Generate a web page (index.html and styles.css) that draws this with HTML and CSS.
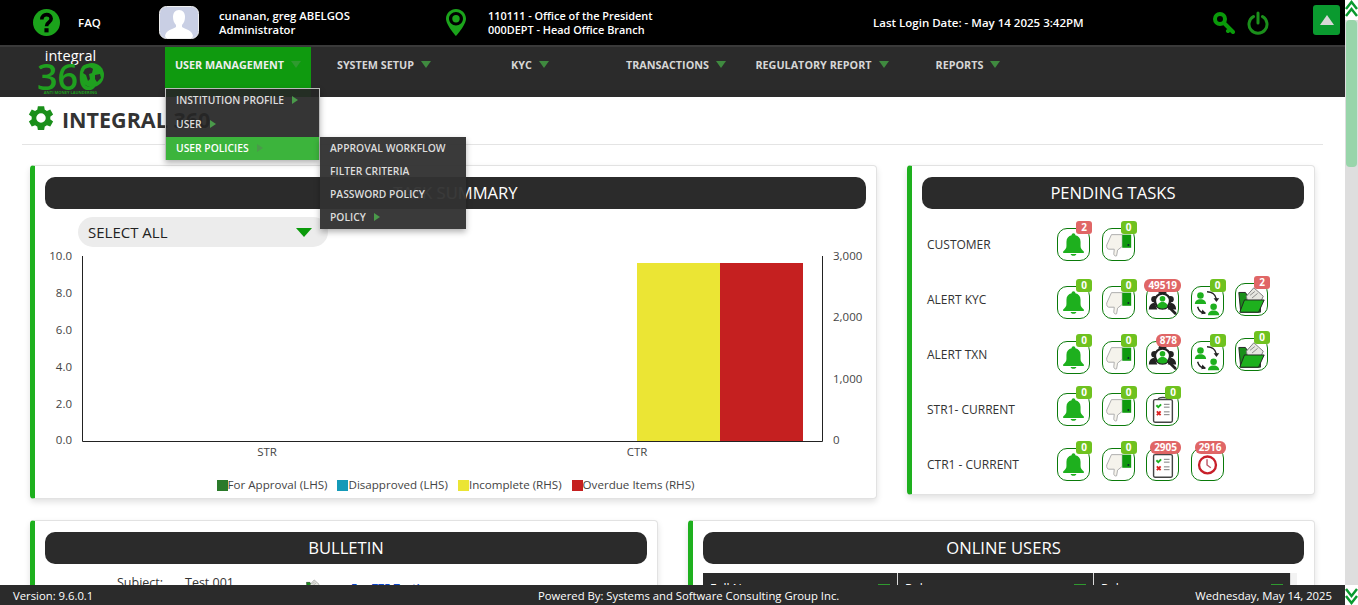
FILE: index.html
```html
<!DOCTYPE html>
<html lang="en">
<head>
  <meta charset="UTF-8" />
  <meta name="viewport" content="width=device-width, initial-scale=1.0"/>
  <title>Integral 360</title>
  <link rel="stylesheet" href="styles.css">
</head>
<body>
  <svg class="defs" width="0" height="0">
    <symbol id="i-bell" viewBox="0 0 33 33">
      <path fill="#1eb01e" d="M16.500 28.500c1.700 0 3-.9 3-2h-6c0 1.100 1.300 2 3 2zM24 18v-4.500c0-3.500-2.200-6-5.500-6.800V6.500c0-1.100-.9-2-2-2s-2 .9-2 2v.2C11.200 7.500 9 10 9 13.500V18c0 2.500-1.500 4.200-3.500 6v1.500h22V24c-2-1.800-3.500-3.500-3.500-6z"/>
    </symbol>
    <symbol id="i-down" viewBox="0 0 33 33">
      <path fill="#f5f3ec" stroke="#aaa" stroke-width="1" d="M4 17 9 6h11.500v12.500l-5 4-1 6c-1.500.8-3-.5-3-2l.5-5H6c-1.200 0-2.500-2-2-4.500z"/>
      <path fill="#0f9a0f" d="M20.500 6H30v14h-9.500z"/>
      <circle cx="27" cy="17" r="1" fill="#123"/>
    </symbol>
    <symbol id="i-search" viewBox="0 0 33 33">
      <g fill="#222">
        <circle cx="8" cy="13" r="3.500"/><circle cx="25" cy="13" r="3.500"/>
        <path d="M2 24c0-5 3-7 6-7l3 7zM31 24c0-5-3-7-6-7l-3 7z"/>
        <path d="M13 4h7l1 3h-9z"/>
      </g>
      <circle cx="16.500" cy="15" r="8" fill="#fff" stroke="#222" stroke-width="2.500"/>
      <circle cx="16.500" cy="12.500" r="3" fill="#1eb01e"/>
      <path fill="#1eb01e" d="M11 21c0-3 2.500-5 5.500-5s5.500 2 5.500 5c-3 2.500-8 2.500-11 0z"/>
      <path stroke="#222" stroke-width="3" stroke-linecap="round" d="m23 21 7 7"/>
    </symbol>
    <symbol id="i-swap" viewBox="0 0 33 33">
      <g fill="#1eb01e">
        <circle cx="9" cy="9" r="3.500"/><path d="M3 18c0-3 2.500-5 6-5s6 2 6 5z"/>
        <circle cx="23" cy="21" r="3.500"/><path d="M17 30c0-3 2.500-5 6-5s6 2 6 5z"/>
      </g>
      <g fill="none" stroke="#222" stroke-width="1.500">
        <path d="M16 5c4 0 9 2 10 8"/><path d="M6 21c1 4 4 6.500 8 7"/>
      </g>
      <path fill="#222" d="m23 12 6 0-3 4zM11 24l-1 5 5-1z"/>
    </symbol>
    <symbol id="i-folder" viewBox="0 0 33 33">
      <path fill="#1a8f1a" stroke="#222" d="M3 9h7l2 3h14v18H5z"/>
      <path fill="#e6e6e0" stroke="#777" d="m11 13 8-9 10 9-4 9H13z"/>
      <path stroke="#888" d="m15 12 5-4m-3 7 6-5"/>
      <path fill="#1eb01e" stroke="#222" d="M9 17h21l-6 13H4z"/>
    </symbol>
    <symbol id="i-check" viewBox="0 0 33 33">
      <rect x="7" y="6" width="20" height="24" rx="1.500" fill="#fff" stroke="#444" stroke-width="1.500"/>
      <path fill="none" stroke="#444" stroke-width="1.500" d="M12 6c0-3 10-3 10 0"/>
      <path fill="none" stroke="#1eb01e" stroke-width="2" d="m10 12 2 2 3-3"/>
      <path fill="none" stroke="#d22" stroke-width="2" d="m10.500 18.500 4 4m0-4-4 4"/>
      <path stroke="#777" d="M18 11h6m-6 3h6m-6 5h6m-6 3h6"/>
    </symbol>
    <symbol id="i-clock" viewBox="0 0 33 33">
      <circle cx="16.500" cy="17" r="9" fill="#fff" stroke="#c8202a" stroke-width="2.500"/>
      <path fill="none" stroke="#b56" stroke-width="1.500" d="M16 11v6l4 3"/>
    </symbol>
  </svg>

  <div class="shell">
    <div class="page">
      <header class="topbar">
        <a class="faq">
          <svg class="help" viewBox="0 0 26 26"><circle cx="13" cy="13" r="13" fill="#1ba31b"/><path fill="none" stroke="#000" stroke-width="3.500" d="M8.500 10c0-6 9-6 9-.5 0 3.500-4.500 3-4.500 7"/><rect x="11" y="18.500" width="4" height="4" fill="#000"/></svg>
          <span>FAQ</span>
        </a>
        <div class="who">
          <svg class="avatar" viewBox="0 0 40 33"><rect x=".5" y=".5" width="39" height="32" rx="7" fill="#c9cfe4" stroke="#eee"/><path fill="#fff" d="M20 4c4 0 6 3 6 7 0 3-1 6-3 8v2c3 2 10 3 11 9l-1 2H7l-1-2c1-6 8-7 11-9v-2c-2-2-3-5-3-8 0-4 2-7 6-7z"/></svg>
          <div class="lines">
            <div>cunanan, greg ABELGOS</div>
            <div>Administrator</div>
          </div>
        </div>
        <div class="where">
          <svg class="pin" viewBox="0 0 20 27"><path fill="#1ba31b" fill-rule="evenodd" d="M10 0C4.500 0 0 4.300 0 9.700 0 16 10 27 10 27s10-11 10-17.300C20 4.300 15.500 0 10 0zm0 3c3.800 0 7 3 7 6.700s-3.200 6.700-7 6.700-7-3-7-6.700S6.200 3 10 3z"/><circle cx="10" cy="9.700" r="3.700" fill="#1ba31b"/></svg>
          <div class="lines">
            <div>110111 - Office of the President</div>
            <div>000DEPT - Head Office Branch</div>
          </div>
        </div>
        <div class="last-login">Last Login Date: - May 14 2025 3:42PM</div>
        <svg class="key" viewBox="0 0 22 22"><circle cx="7" cy="7" r="5" fill="none" stroke="#0a9a0a" stroke-width="4"/><path stroke="#0a9a0a" stroke-width="4" stroke-linecap="round" d="m11 11 9 9m-3-3-2 2"/></svg>
        <svg class="power" viewBox="0 0 22 22"><path fill="none" stroke="#1b8f1b" stroke-width="3" stroke-linecap="round" d="M6.500 4.500a9 9 0 1 0 9 0M11 1v10"/></svg>
        <button class="collapse"></button>
      </header>

      <nav class="mainnav">
        <div class="logo">
          <div class="logo-top">integral</div>
          <div class="logo-num">360</div>
          <svg class="logo-globe" viewBox="0 0 24 24"><circle cx="12" cy="12" r="12" fill="#1fa01f"/><path fill="#2b2b2b" d="M5 6c3-2 6-2 8 0l-1 4-3 1 1 5-2 2-2-6-3-2zM15 12l5-1 1 4-4 4-2-3z"/></svg>
          <div class="logo-sub">ANTI MONEY LAUNDERING</div>
        </div>
        <div class="menu">
          <div class="menu-item active">
            <span>USER MANAGEMENT</span><i class="caret"></i>
            <ul class="dropdown">
              <li>INSTITUTION PROFILE<i class="arrow"></i></li>
              <li>USER<i class="arrow"></i></li>
              <li class="current">USER POLICIES<i class="arrow"></i>
                <ul class="dropdown sub">
                  <li>APPROVAL WORKFLOW</li>
                  <li>FILTER CRITERIA</li>
                  <li>PASSWORD POLICY</li>
                  <li>POLICY<i class="arrow"></i></li>
                </ul>
              </li>
            </ul>
          </div>
          <div class="menu-item"><span>SYSTEM SETUP</span><i class="caret"></i></div>
          <div class="menu-item"><span>KYC</span><i class="caret"></i></div>
          <div class="menu-item"><span>TRANSACTIONS</span><i class="caret"></i></div>
          <div class="menu-item"><span>REGULATORY REPORT</span><i class="caret"></i></div>
          <div class="menu-item"><span>REPORTS</span><i class="caret"></i></div>
        </div>
      </nav>

      <main class="content">
        <div class="page-title">
          <svg class="gear" viewBox="0 0 24 24"><path fill="#1a8f1a" d="M19.400 13a7.600 7.600 0 0 0 0-2l2.300-1.800-2.300-4-2.700 1.100a7.600 7.600 0 0 0-1.700-1L14.500 2.500h-5L9 5.300a7.600 7.600 0 0 0-1.700 1L4.600 5.200l-2.300 4L4.600 11a7.600 7.600 0 0 0 0 2l-2.300 1.800 2.300 4 2.700-1.100c.5.400 1.100.7 1.700 1l.5 2.800h5l.5-2.800c.6-.3 1.200-.6 1.700-1l2.700 1.100 2.300-4zM12 15.800a3.800 3.800 0 1 1 0-7.600 3.800 3.800 0 0 1 0 7.600z"/></svg>
          <h1>INTEGRAL 360</h1>
        </div>

        <div class="row row-top">
          <section class="panel chart-panel">
            <h2 class="panel-title">TASK SUMMARY</h2>
            <div class="select-all"><span>SELECT ALL</span><i></i></div>
            <svg class="chart" width="821" height="216" viewBox="0 0 821 216">
              <rect x="592" y="16" width="83" height="178" fill="#ebe534"/>
              <rect x="675" y="16" width="83" height="178" fill="#c52020"/>
              <path fill="none" stroke="#222" d="M37.500 9v185.500h740V9"/>
              <g class="tick" text-anchor="end">
                <text x="27" y="13">10.0</text><text x="27" y="50">8.0</text><text x="27" y="87">6.0</text>
                <text x="27" y="124">4.0</text><text x="27" y="161">2.0</text><text x="27" y="197">0.0</text>
              </g>
              <g class="tick">
                <text x="788" y="13">3,000</text><text x="788" y="74">2,000</text>
                <text x="788" y="136">1,000</text><text x="788" y="197">0</text>
                <text x="222" y="209" text-anchor="middle">STR</text><text x="592" y="209" text-anchor="middle">CTR</text>
              </g>
            </svg>
            <div class="legend">
              <span><i class="sw-green"></i>For Approval (LHS)</span>
              <span><i class="sw-blue"></i>Disapproved (LHS)</span>
              <span><i class="sw-yellow"></i>Incomplete (RHS)</span>
              <span><i class="sw-red"></i>Overdue Items (RHS)</span>
            </div>
          </section>

          <section class="panel tasks-panel">
            <h2 class="panel-title">PENDING TASKS</h2>
            <div class="task-row">
              <div class="task-name">CUSTOMER</div>
              <a class="task-btn"><svg><use href="#i-bell"/></svg><b class="badge red">2</b></a>
              <a class="task-btn"><svg><use href="#i-down"/></svg><b class="badge">0</b></a>
            </div>
            <div class="task-row alert">
              <div class="task-name">ALERT KYC</div>
              <a class="task-btn"><svg><use href="#i-bell"/></svg><b class="badge">0</b></a>
              <a class="task-btn"><svg><use href="#i-down"/></svg><b class="badge">0</b></a>
              <a class="task-btn"><svg><use href="#i-search"/></svg><b class="badge red wide">49519</b></a>
              <a class="task-btn"><svg><use href="#i-swap"/></svg><b class="badge">0</b></a>
              <a class="task-btn raised"><svg><use href="#i-folder"/></svg><b class="badge red">2</b></a>
            </div>
            <div class="task-row alert">
              <div class="task-name">ALERT TXN</div>
              <a class="task-btn"><svg><use href="#i-bell"/></svg><b class="badge">0</b></a>
              <a class="task-btn"><svg><use href="#i-down"/></svg><b class="badge">0</b></a>
              <a class="task-btn"><svg><use href="#i-search"/></svg><b class="badge red wide">878</b></a>
              <a class="task-btn"><svg><use href="#i-swap"/></svg><b class="badge">0</b></a>
              <a class="task-btn raised"><svg><use href="#i-folder"/></svg><b class="badge">0</b></a>
            </div>
            <div class="task-row">
              <div class="task-name">STR1- CURRENT</div>
              <a class="task-btn"><svg><use href="#i-bell"/></svg><b class="badge">0</b></a>
              <a class="task-btn"><svg><use href="#i-down"/></svg><b class="badge">0</b></a>
              <a class="task-btn"><svg><use href="#i-check"/></svg><b class="badge">0</b></a>
            </div>
            <div class="task-row">
              <div class="task-name">CTR1 - CURRENT</div>
              <a class="task-btn"><svg><use href="#i-bell"/></svg><b class="badge">0</b></a>
              <a class="task-btn"><svg><use href="#i-down"/></svg><b class="badge">0</b></a>
              <a class="task-btn"><svg><use href="#i-check"/></svg><b class="badge red wide">2905</b></a>
              <a class="task-btn"><svg><use href="#i-clock"/></svg><b class="badge red wide">2916</b></a>
            </div>
          </section>
        </div>

        <div class="row row-bottom">
          <section class="panel">
            <h2 class="panel-title">BULLETIN</h2>
            <div class="bulletin-row">
              <span class="b-label">Subject:</span>
              <span class="b-value">Test 001</span>
              <svg class="b-icon" width="16" height="16"><use href="#i-folder"/></svg>
              <a class="b-link">For 775 Testing</a>
            </div>
          </section>
          <section class="panel">
            <h2 class="panel-title">ONLINE USERS</h2>
            <div class="users-head">
              <div class="users-table">
                <div>Full Name<i></i></div>
                <div>Role<i></i></div>
                <div>Role<i></i></div>
              </div>
              <div class="users-gutter"></div>
            </div>
          </section>
        </div>
      </main>

      <footer class="statusbar">
        <span>Version: 9.6.0.1</span>
        <span>Powered By: Systems and Software Consulting Group Inc.</span>
        <span class="today">Wednesday, May 14, 2025</span>
      </footer>
    </div>

    <div class="scrollbar">
      <svg class="chev" viewBox="0 0 13 20"><path fill="none" stroke="#0a9a2f" stroke-width="2.500" d="m1 9 5.500-7L12 9M1 16l5.500-7 5.500 7"/></svg>
      <div class="thumb"></div>
      <svg class="chev" viewBox="0 0 13 20"><path fill="none" stroke="#0a9a2f" stroke-width="2.500" d="m1 4 5.500 7L12 4M1 11l5.500 7 5.500-7"/></svg>
    </div>
  </div>
</body>
</html>
```

FILE: styles.css
```css
* {
  box-sizing: border-box;
}

body {
  font-family: 'Open Sans', sans-serif;
  margin: 0;
  height: 100vh;
  overflow: hidden;
  background: white;
  color: #333;
}

.defs {
  position: absolute;
}

.shell {
  display: flex;
  height: 100%;
}

.page {
  flex: 1;
  min-width: 0;
  display: flex;
  flex-direction: column;
}

/* top black bar */
.topbar {
  height: 47px;
  flex: none;
  display: flex;
  align-items: center;
  background: black;
  border-bottom: 2px solid #3a3a3a;
  color: white;
  font-size: 11.5px;
  font-weight: 600;
  padding-left: 33px;
  line-height: 14px;
}

.faq {
  display: flex;
  align-items: center;
  gap: 18px;
  width: 126px;
}

.help {
  width: 27px;
  height: 27px;
}

.who {
  display: flex;
  align-items: center;
  gap: 20px;
  width: 287px;
  font-size: 11.3px;
}

.avatar {
  width: 40px;
  height: 33px;
}

.where {
  display: flex;
  align-items: center;
  gap: 22px;
  width: 427px;
  font-size: 10.9px;
}

.pin {
  width: 20px;
  height: 27px;
}

.last-login {
  width: 340px;
}

.key {
  width: 22px;
  height: 22px;
  margin-right: 12px;
}

.power {
  width: 22px;
  height: 24px;
}

.collapse {
  width: 27px;
  height: 30px;
  margin-left: 44px;
  margin-top: -6px;
  border: none;
  border-radius: 3px;
  background: #0a9a2f;
  position: relative;
}

.collapse::after {
  content: "";
  position: absolute;
  left: 7px;
  top: 10px;
  border-left: 7px solid transparent;
  border-right: 7px solid transparent;
  border-bottom: 10px solid #d8d8d8;
}

/* main menu */
.mainnav {
  height: 50px;
  flex: none;
  display: flex;
  background: #2b2b2b;
}

.logo {
  position: relative;
  width: 165px;
  padding: 2px 0 0 37px;
  color: white;
}

.logo-top {
  width: 67px;
  text-align: center;
  font-size: 14.5px;
  line-height: 14px;
}

.logo-num {
  font-size: 36px;
  line-height: 27px;
  font-weight: 600;
  color: #1fa01f;
}

.logo-globe {
  position: absolute;
  left: 80px;
  top: 16px;
  width: 24px;
  height: 24px;
}

.logo-sub {
  width: 67px;
  text-align: center;
  font-size: 4px;
  line-height: 5px;
  font-weight: 700;
  color: #1fa01f;
  white-space: nowrap;
}

.menu {
  display: grid;
  grid-template-columns: repeat(6, 146px);
}

.menu-item {
  position: relative;
  display: flex;
  align-items: center;
  justify-content: center;
  gap: 7px;
  padding-bottom: 16px;
  color: #d6d6d6;
  font-size: 10.8px;
  font-weight: 700;
}

.menu-item.active {
  background: #0f9a0f;
  color: #eee;
}

.caret {
  border-left: 5px solid transparent;
  border-right: 5px solid transparent;
  border-top: 7px solid #3f8a3f;
}

.active > .caret {
  border-top-color: #2f9a2f;
}

.dropdown {
  position: absolute;
  left: 0;
  top: 41px;
  z-index: 5;
  width: 155px;
  margin: 0;
  padding: 0;
  list-style: none;
  background: rgba(38, 38, 38, 0.93);
  border: 1px solid #bbb;
  border-bottom: none;
  box-shadow: 0 3px 6px rgba(0, 0, 0, 0.3);
  color: #ddd;
  font-size: 10.3px;
  font-weight: 600;
}

.dropdown li {
  position: relative;
  height: 24px;
  line-height: 22px;
  padding-left: 10px;
}

.dropdown li.current {
  height: 23px;
  background: #3cb43c;
  color: white;
}

.dropdown.sub {
  left: 154px;
  top: 0;
  width: 146px;
  border: none;
  height: 92px;
  background: rgba(50, 50, 50, 0.96);
  color: #ddd;
}

.dropdown.sub li {
  height: 23px;
}

.arrow {
  display: inline-block;
  margin-left: 8px;
  border-top: 4px solid transparent;
  border-bottom: 4px solid transparent;
  border-left: 6px solid #4a9a4a;
}

/* page body */
.content {
  flex: 1;
  min-height: 0;
  overflow: hidden;
}

.page-title {
  height: 48px;
  margin: 0 22px 20px;
  padding: 6px 0 0 4px;
  display: flex;
  gap: 6px;
  border-bottom: 1px solid #e4e4e4;
}

.gear {
  width: 30px;
  height: 30px;
}

h1 {
  margin: 0;
  padding-top: 2px;
  font-size: 21.5px;
  line-height: 30px;
  font-weight: 700;
  color: #333;
}

.row {
  display: grid;
  column-gap: 30px;
  padding-left: 30px;
}

.row-top {
  grid-template-columns: 847px 408px;
  align-items: start;
}

.row-bottom {
  grid-template-columns: 628px 627px;
  margin-top: 21px;
}

.panel {
  background: white;
  border: 1px solid #e2e2e2;
  border-left: 5px solid #1eb01e;
  border-radius: 4px;
  box-shadow: 0 3px 6px rgba(0, 0, 0, 0.12);
  padding: 11px 10px 0;
}

.panel-title {
  margin: 0;
  height: 32px;
  line-height: 31px;
  border-radius: 10px;
  background: #2b2b2b;
  color: white;
  text-align: center;
  font-size: 16.6px;
  font-weight: 400;
}

.chart-panel {
  height: 334px;
}

.tasks-panel {
  height: 330px;
}

.select-all {
  width: 250px;
  height: 30px;
  margin: 8px 0 0 33px;
  padding: 0 16px 0 10px;
  display: flex;
  align-items: center;
  justify-content: space-between;
  border-radius: 15px;
  background: #ececec;
  color: #222;
  font-size: 15px;
}

.select-all i {
  border-left: 8px solid transparent;
  border-right: 8px solid transparent;
  border-top: 9px solid #0a9a0a;
}

.chart {
  display: block;
}

.tick text {
  font-size: 11.5px;
  fill: #444;
}

.legend {
  display: flex;
  justify-content: center;
  gap: 10px;
  margin-top: 14px;
  font-size: 11.6px;
  color: #444;
}

.legend i {
  display: inline-block;
  width: 11px;
  height: 11px;
  vertical-align: -2px;
}

.sw-green { background: #2a7a2a; }
.sw-blue { background: #149ab8; }
.sw-yellow { background: #ebe534; }
.sw-red { background: #c52020; }

/* pending tasks */
.task-row {
  display: flex;
  height: 55px;
  padding-top: 19px;
  gap: 11.5px;
}

.task-row.alert {
  padding-top: 22px;
}

.task-name {
  width: 125px;
  margin: 0 -6.5px 0 5px;
  height: 33px;
  line-height: 33px;
  font-size: 12px;
  color: #333;
}

.alert .task-name {
  margin-top: -3px;
}

.task-btn {
  position: relative;
  flex: none;
  width: 33px;
  height: 33px;
  border: 1px solid #0a7a0a;
  border-radius: 10px;
}

.task-btn svg {
  display: block;
  width: 31px;
  height: 31px;
}

.task-btn.raised {
  margin-top: -3px;
}

.badge {
  position: absolute;
  right: -3px;
  top: -8px;
  min-width: 16px;
  height: 13px;
  border-radius: 3px;
  background: #6fc21f;
  color: white;
  font-size: 10px;
  line-height: 13px;
  text-align: center;
}

.badge.red {
  background: #e06666;
}

.badge.wide {
  padding: 0 4px;
  border-radius: 6px;
}

/* bottom row, cut off by the footer */
.bulletin-row {
  display: flex;
  align-items: flex-start;
  margin-top: 11px;
  font-size: 12.5px;
  line-height: 16px;
  padding-left: 72px;
}

.b-label {
  width: 68px;
}

.b-value {
  width: 120px;
}

.b-icon {
  margin-top: 3px;
  margin-right: 30px;
}

.b-link {
  margin-top: 5px;
  color: #0d47c8;
  font-size: 11px;
  font-weight: 700;
}

.users-head {
  display: flex;
  margin-top: 9px;
}

.users-table {
  display: grid;
  grid-template-columns: 195px 196px 197px;
  background: #2b2b2b;
  color: white;
  font-size: 12px;
  height: 30px;
}

.users-table div {
  position: relative;
  padding: 7px 7px;
  border-right: 1px solid #ddd;
}

.users-table i {
  position: absolute;
  right: 7px;
  top: 11px;
  width: 12px;
  height: 2px;
  background: #2f9a2f;
}

.users-gutter {
  width: 6px;
  background: #f3f3f3;
}

.statusbar {
  height: 20px;
  flex: none;
  display: grid;
  grid-template-columns: 525px auto 1fr;
  align-items: center;
  padding: 0 13px;
  background: #2b2b2b;
  color: white;
  font-size: 11.3px;
}

.today {
  justify-self: end;
}

/* scrollbar strip */
.scrollbar {
  width: 13px;
  flex: none;
  display: flex;
  flex-direction: column;
  background: #dedede;
}

.chev {
  display: block;
  width: 13px;
  height: 20px;
  flex: none;
  background: white;
}

.thumb {
  flex: none;
  height: 147px;
  margin: 0 1px 418px;
  border-radius: 4px;
  background: #98d5aa;
}
```
